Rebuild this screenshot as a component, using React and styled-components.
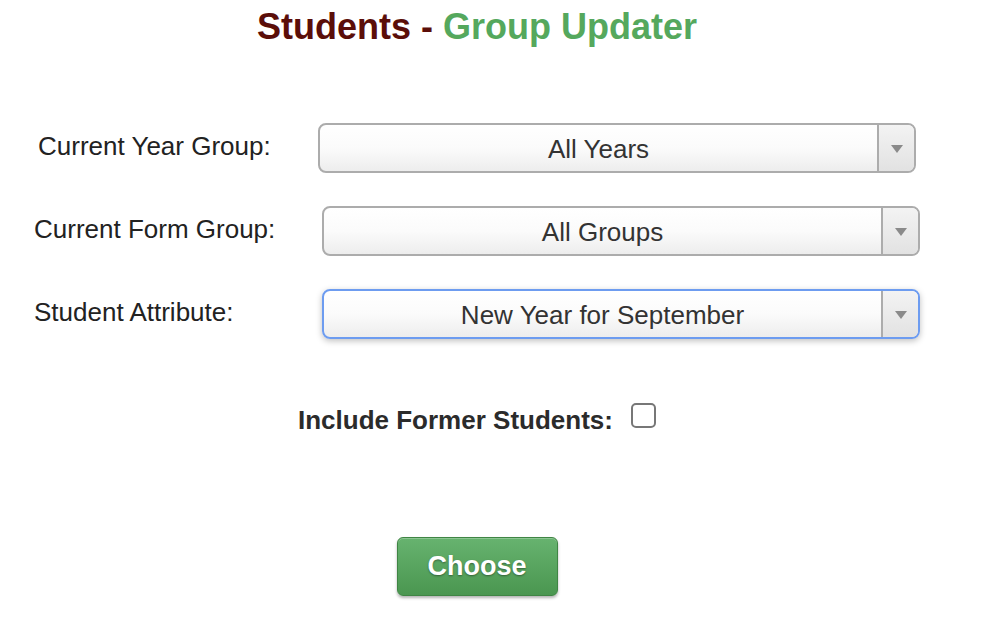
import React, { useState } from "react";
import styled, { createGlobalStyle } from "styled-components";

const GlobalStyle = createGlobalStyle`
    html, body {
        margin: 0;
        padding: 0;
        background: #fff;
        font-family: "Liberation Sans", Arial, Helvetica, sans-serif;
    }
`;

const App = () => {
    const [anio, cambiarAnio] = useState("All Years");
    const [grupo, cambiarGrupo] = useState("All Groups");
    const [atributo, cambiarAtributo] = useState("New Year for September");
    const [antiguos, cambiarAntiguos] = useState(false);

    return (
        <Pagina>
            <GlobalStyle />
            <Titulo>
                <Rojo>Students - </Rojo>
                <Verde>Group Updater</Verde>
            </Titulo>

            <Formulario onSubmit={(e) => e.preventDefault()}>
                <Fila $izquierda={38}>
                    <Etiqueta $ancho={280}>Current Year Group:</Etiqueta>
                    <Selector>
                        <Opciones value={anio} onChange={(e) => cambiarAnio(e.target.value)}>
                            <option>All Years</option>
                        </Opciones>
                        <Texto>{anio}</Texto>
                        <Flecha><Triangulo /></Flecha>
                    </Selector>
                </Fila>

                <Fila $izquierda={34}>
                    <Etiqueta $ancho={288}>Current Form Group:</Etiqueta>
                    <Selector>
                        <Opciones value={grupo} onChange={(e) => cambiarGrupo(e.target.value)}>
                            <option>All Groups</option>
                        </Opciones>
                        <Texto>{grupo}</Texto>
                        <Flecha><Triangulo /></Flecha>
                    </Selector>
                </Fila>

                <Fila $izquierda={34}>
                    <Etiqueta $ancho={288}>Student Attribute:</Etiqueta>
                    <Selector $activo>
                        <Opciones value={atributo} onChange={(e) => cambiarAtributo(e.target.value)}>
                            <option>New Year for September</option>
                        </Opciones>
                        <Texto>{atributo}</Texto>
                        <Flecha><Triangulo /></Flecha>
                    </Selector>
                </Fila>

                <FilaCasilla>
                    <EtiquetaNegrita htmlFor="antiguos">Include Former Students:</EtiquetaNegrita>
                    <Casilla
                        id="antiguos"
                        type="checkbox"
                        checked={antiguos}
                        onChange={() => cambiarAntiguos(!antiguos)}
                    />
                </FilaCasilla>

                <ZonaBoton>
                    <Boton type="submit">Choose</Boton>
                </ZonaBoton>
            </Formulario>
        </Pagina>
    );
}

const Pagina = styled.div`
    width: 996px;
    height: 628px;
    overflow: hidden;
`;

const Titulo = styled.h1`
    margin: 0;
    padding-top: 7px;
    padding-left: 18px;
    text-align: center;
    width: 918px;
    font-size: 36px;
    line-height: 40px;
    font-weight: bold;
`;

const Rojo = styled.span`
    color: #5b0e09;
`;

const Verde = styled.span`
    color: #55a85d;
`;

const Formulario = styled.form`
    display: flex;
    flex-direction: column;
    gap: 33px;
    padding-top: 76px;
`;

const Fila = styled.div`
    display: flex;
    align-items: center;
    padding-left: ${(props) => props.$izquierda}px;
`;

const Etiqueta = styled.label`
    flex: 0 0 ${(props) => props.$ancho}px;
    font-size: 26px;
    color: #222;
    margin-top: -3px;
`;

const Selector = styled.div`
    position: relative;
    flex: 0 0 auto;
    width: 598px;
    height: 50px;
    box-sizing: border-box;
    display: flex;
    border: 2px solid ${(props) => (props.$activo ? "#6d9cf0" : "#acacac")};
    border-radius: 8px;
    background: linear-gradient(#ffffff 0%, #fbfbfb 50%, #ededed 100%);
    box-shadow: ${(props) => (props.$activo ? "0 2px 6px rgba(0,0,0,.25)" : "none")};
    overflow: hidden;
`;

const Opciones = styled.select`
    position: absolute;
    inset: 0;
    opacity: 0;
    cursor: pointer;
`;

const Texto = styled.div`
    flex: 1;
    display: flex;
    align-items: center;
    justify-content: center;
    font-size: 26px;
    color: #333;
    padding-top: 2px;
`;

const Flecha = styled.div`
    flex: 0 0 35px;
    display: flex;
    align-items: center;
    justify-content: center;
    border-left: 2px solid #acacac;
    background: linear-gradient(#f3f3f3, #e2e2e2);
`;

const Triangulo = styled.span`
    width: 0;
    height: 0;
    border-left: 6px solid transparent;
    border-right: 6px solid transparent;
    border-top: 8px solid #8a8a8a;
    margin-top: 2px;
`;

const FilaCasilla = styled.div`
    display: flex;
    align-items: center;
    gap: 18px;
    padding-top: 23px;
    padding-left: 298px;
`;

const EtiquetaNegrita = styled.label`
    font-size: 26px;
    font-weight: bold;
    color: #2b2b2b;
    margin-top: 10px;
`;

const Casilla = styled.input`
    appearance: none;
    width: 25px;
    height: 25px;
    margin: 0;
    box-sizing: border-box;
    border: 2px solid #777;
    border-radius: 5px;
    background: #fff;
    cursor: pointer;

    &:checked {
        background: #4a90e2;
        border-color: #4a90e2;
    }
`;

const ZonaBoton = styled.div`
    display: flex;
    justify-content: center;
    padding-top: 68px;
    margin-left: -42px;
`;

const Boton = styled.button`
    width: 161px;
    height: 59px;
    border: 1px solid #3f8544;
    border-radius: 6px;
    background: linear-gradient(#67b36f, #4a9650);
    color: #fff;
    font-family: "Liberation Sans", Arial, sans-serif;
    font-size: 27px;
    font-weight: bold;
    text-shadow: 0 1px 2px rgba(0,0,0,.4);
    box-shadow: 0 2px 3px rgba(0,0,0,.3), inset 0 1px 0 rgba(255,255,255,.25);
    cursor: pointer;
`;

export default App;
